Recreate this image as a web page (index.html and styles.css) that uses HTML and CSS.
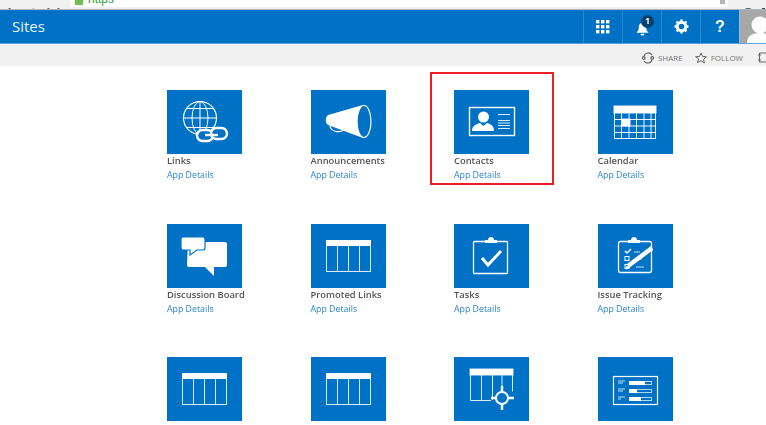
FILE: index.html
```html
<!DOCTYPE html>
<html lang="en">
<head>
    <meta charset="UTF-8">
    <title>Sites</title>
    <link rel="stylesheet" href="styles.css">
</head>
<body>
    <!-- Browser toolbar, cut off by the top of the picture -->
    <div class="browser">
        <div class="browser-nav">
            <svg width="60" height="9" viewBox="0 0 60 9" fill="none" stroke="#6d6d6d" stroke-width="1.6">
                <path d="M12 -2l-4 4h9" />
                <path d="M31 -2l4 4h-9" stroke="#c4c4c4" />
                <path d="M58 -1a5 5 0 1 1-9 0" stroke-width="2" />
            </svg>
        </div>
        <div class="url-bar">
            <span class="lock"></span>
            <span class="url">https</span>
            <span class="url-star"></span>
        </div>
        <div class="browser-tools">
            <svg width="38" height="9" viewBox="0 0 38 9">
                <path d="M14 6l4-6h5l-3 5-3 2z" fill="#6d6d6d" />
                <rect x="34" y="0" width="3" height="3" fill="#444" />
            </svg>
        </div>
    </div>

    <!-- Suite bar -->
    <header class="suite">
        <div class="suite-title">Sites</div>
        <div class="suite-btn">
            <svg width="14" height="14" viewBox="0 0 14 14" fill="#fff">
                <rect x="0" y="0" width="3.4" height="3.4" /><rect x="5" y="0" width="3.4" height="3.4" /><rect x="10" y="0" width="3.4" height="3.4" />
                <rect x="0" y="5" width="3.4" height="3.4" /><rect x="5" y="5" width="3.4" height="3.4" /><rect x="10" y="5" width="3.4" height="3.4" />
                <rect x="0" y="10" width="3.4" height="3.4" /><rect x="5" y="10" width="3.4" height="3.4" /><rect x="10" y="10" width="3.4" height="3.4" />
            </svg>
        </div>
        <div class="suite-btn">
            <svg class="bell" width="13" height="14" viewBox="0 0 14 15" fill="#fff">
                <path d="M7 1c3 0 4 2 4 5 0 3 1 4 2.500 5.500h-13C2 10 3 9 3 6c0-3 1-5 4-5z" />
                <path d="M5 12.500h4a2 2 0 0 1-4 0z" />
            </svg>
            <span class="badge">1</span>
        </div>
        <div class="suite-btn">
            <svg width="15" height="15" viewBox="0 0 15 15">
                <circle cx="7.500" cy="7.500" r="4.300" fill="none" stroke="#fff" stroke-width="3" />
                <path d="M7.500 0.500v14M0.500 7.500h14M2.500 2.500l10 10M12.500 2.500l-10 10" stroke="#fff" stroke-width="2.400" stroke-dasharray="2.600 8.800" />
            </svg>
        </div>
        <div class="suite-btn suite-help">?</div>
        <div class="avatar">
            <svg width="26" height="33" viewBox="0 0 26 33" fill="#fff">
                <circle cx="20" cy="15" r="8.500" />
                <path d="M7 33c0-7 5-10 13-10s13 3 13 10z" />
            </svg>
        </div>
    </header>

    <!-- Share / follow strip -->
    <div class="ribbon">
        <a class="ribbon-item">
            <svg width="12" height="12" viewBox="0 0 12 12" fill="none" stroke="#666" stroke-width="1.200">
                <path d="M2 4a4.500 4.500 0 0 1 8-1M10 8a4.500 4.500 0 0 1-8 1" />
                <circle cx="1.800" cy="6" r="1.300" /><circle cx="10.200" cy="6" r="1.300" />
            </svg>
            SHARE
        </a>
        <a class="ribbon-item">
            <svg width="12" height="12" viewBox="0 0 12 12" fill="none" stroke="#666" stroke-width="1">
                <path d="M6 1l1.500 3.400 3.900.4-2.900 2.500.9 3.700L6 8.700l-3.400 1.800.9-3.700L.6 4.800l3.900-.4z" />
            </svg>
            FOLLOW
        </a>
        <a class="ribbon-item ribbon-last">
            <svg width="8" height="11" viewBox="0 0 8 11" fill="none" stroke="#666" stroke-width="1">
                <path d="M8 1H1.500v9H8M0 3h3M0 8h3" />
            </svg>
        </a>
    </div>

    <!-- Table icon used by several apps -->
    <svg class="defs" width="0" height="0">
        <symbol id="table-icon" viewBox="0 0 75 64">
            <rect x="15.500" y="16.500" width="44" height="31" fill="none" stroke="#fff" stroke-opacity=".85" />
            <rect x="15" y="16" width="45" height="6" fill="#fff" />
            <path d="M26.500 22v25M37.500 22v25M48.500 22v25" stroke="#fff" stroke-opacity=".85" fill="none" />
        </symbol>
    </svg>

    <main class="apps">
        <div class="app">
            <div class="tile">
                <svg viewBox="0 0 75 64" fill="none" stroke="#fff">
                    <circle cx="33" cy="28" r="16.500" stroke-width="1.200" />
                    <ellipse cx="33" cy="28" rx="8" ry="16.500" />
                    <path d="M33 11.500v33M16.500 28h33M19 18.500h28M19 37.500h28" />
                    <rect x="30" y="40" width="16" height="11" rx="5.500" fill="#0072c6" stroke-width="2.400" />
                    <rect x="44" y="38" width="16" height="11" rx="5.500" fill="#0072c6" stroke-width="2.400" />
                    <path d="M38 45h13" stroke-width="2.400" />
                </svg>
            </div>
            <div class="app-name">Links</div>
            <a class="app-link">App Details</a>
        </div>

        <div class="app">
            <div class="tile">
                <svg viewBox="0 0 75 64" fill="none" stroke="#fff">
                    <path d="M19 36c1 6 9 7 14 4" stroke-width="1.300" />
                    <path d="M17 25L52 15C46 22 46 42 52 48L17 35c-3-2-3-8 0-10z" fill="#fff" stroke="none" />
                    <ellipse cx="53" cy="31.500" rx="7" ry="16" fill="#0072c6" stroke-width="1.200" />
                </svg>
            </div>
            <div class="app-name">Announcements</div>
            <a class="app-link">App Details</a>
        </div>

        <div class="app">
            <div class="tile">
                <svg viewBox="0 0 75 64" fill="none" stroke="#fff">
                    <rect x="15.500" y="17.500" width="45" height="28" stroke-width="1.400" />
                    <circle cx="29.500" cy="27" r="5.500" fill="#fff" stroke="none" />
                    <path d="M18 41c0-5 4-7 8-8l3.500 3 3.500-3c4 1 7 3 7 8z" fill="#fff" stroke="none" />
                    <path d="M44 24.500h12M44 30.500h12M44 33h12M44 35.500h12M44 38.500h12" stroke-opacity=".85" />
                </svg>
            </div>
            <div class="app-name">Contacts</div>
            <a class="app-link">App Details</a>
            <div class="highlight"></div>
        </div>

        <div class="app">
            <div class="tile">
                <svg viewBox="0 0 75 64" fill="none" stroke="#fff" stroke-opacity=".9">
                    <rect x="16.500" y="16.500" width="41" height="32" />
                    <rect x="16" y="16" width="42" height="7" fill="#fff" />
                    <path d="M16 29.500h42M16 36h42M16 42.500h42M23.500 23v25M31 23v25M38.500 23v25M46 23v25M53 23v25" />
                    <rect x="24" y="29" width="8" height="7" fill="#fff" />
                </svg>
            </div>
            <div class="app-name">Calendar</div>
            <a class="app-link">App Details</a>
        </div>

        <div class="app">
            <div class="tile">
                <svg viewBox="0 0 75 64">
                    <path d="M21 18h37a2 2 0 0 1 2 2v21a2 2 0 0 1-2 2H47v9l-9-9H22a2 2 0 0 1-2-2z" fill="#fff" />
                    <path d="M16 13h20a2 2 0 0 1 2 2v9a2 2 0 0 1-2 2H30l-7 5v-5h-7a2 2 0 0 1-2-2v-9a2 2 0 0 1 2-2z" fill="#fff" stroke="#0072c6" stroke-width="1.200" />
                </svg>
            </div>
            <div class="app-name">Discussion Board</div>
            <a class="app-link">App Details</a>
        </div>

        <div class="app">
            <div class="tile"><svg viewBox="0 0 75 64"><use href="#table-icon" /></svg></div>
            <div class="app-name">Promoted Links</div>
            <a class="app-link">App Details</a>
        </div>

        <div class="app">
            <div class="tile">
                <svg viewBox="0 0 75 64" fill="none" stroke="#fff">
                    <rect x="19.500" y="17.500" width="34" height="32" rx="1" stroke-width="1.300" />
                    <path d="M31 19v-3h3c0-4 6-4 6 0h3v3z" fill="#fff" stroke="none" />
                    <path d="M28 34l6 7 13-14" stroke-width="3" />
                </svg>
            </div>
            <div class="app-name">Tasks</div>
            <a class="app-link">App Details</a>
        </div>

        <div class="app">
            <div class="tile">
                <svg viewBox="0 0 75 64" fill="none" stroke="#fff">
                    <rect x="20.500" y="17.500" width="33" height="31" rx="2" stroke-width="1.300" />
                    <path d="M30 19v-3h3c0-4 6-4 6 0h3v3z" fill="#fff" stroke="none" />
                    <path d="M27 27l2 2 4-4" stroke-width="1.500" />
                    <rect x="27" y="32.500" width="4" height="4" />
                    <rect x="27" y="40.500" width="4" height="4" />
                    <path d="M36 28h6M40 35h4M38 43h8" stroke-opacity=".8" />
                    <path d="M30 42L54 24" stroke-width="4.500" />
                    <path d="M28 45l1-3 2 2z" fill="#fff" />
                </svg>
            </div>
            <div class="app-name">Issue Tracking</div>
            <a class="app-link">App Details</a>
        </div>

        <div class="app">
            <div class="tile"><svg viewBox="0 0 75 64"><use href="#table-icon" /></svg></div>
        </div>

        <div class="app">
            <div class="tile"><svg viewBox="0 0 75 64"><use href="#table-icon" /></svg></div>
        </div>

        <div class="app">
            <div class="tile">
                <svg viewBox="0 0 75 64" fill="none" stroke="#fff" stroke-opacity=".85">
                    <path d="M37 43.500H16.500v-31h42v22" />
                    <rect x="16" y="12" width="43" height="6" fill="#fff" />
                    <path d="M27.500 18v25M38.500 18v25M48 18v15" />
                    <circle cx="48" cy="41" r="6" stroke-width="2" stroke-opacity="1" />
                    <path d="M37 41h5M54 41h6M48 47v6M48 29v6" stroke-width="2.500" stroke-opacity="1" />
                </svg>
            </div>
        </div>

        <div class="app">
            <div class="tile">
                <svg viewBox="0 0 75 64" fill="none" stroke="#fff">
                    <rect x="15.500" y="19.500" width="44" height="28" stroke-width="1.200" />
                    <path d="M20 24h7M20 26h5M20 32h7M20 34h5M20 40h7M20 42h3" stroke-opacity=".75" />
                    <rect x="31.500" y="24.500" width="22" height="3" stroke-opacity=".7" />
                    <rect x="31.500" y="32.500" width="22" height="3" stroke-opacity=".7" />
                    <rect x="31.500" y="40.500" width="22" height="3" stroke-opacity=".7" />
                    <rect x="31" y="24" width="16" height="4" fill="#fff" stroke="none" />
                    <rect x="31" y="32" width="8" height="4" fill="#fff" stroke="none" />
                    <rect x="31" y="40" width="12" height="4" fill="#fff" stroke="none" />
                </svg>
            </div>
        </div>
    </main>
</body>
</html>
```

FILE: styles.css
```css
/* General Styles */
html, body {
    height: 100%;
    overflow: hidden;
}

body {
    margin: 0;
    background: #fff;
    font-family: 'Open Sans', sans-serif;
    color: #444;
    filter: blur(0.35px);
}

/* Browser toolbar */
.browser {
    display: flex;
    height: 9px;
    background: #f1f1f1;
    border-bottom: 1px solid #a9b4bd;
    overflow: hidden;
}

.browser-nav {
    width: 70px;
    flex: none;
}

.url-bar {
    display: flex;
    flex: 1;
    height: 7px;
    gap: 5px;
    padding-left: 5px;
    background: #fff;
    overflow: hidden;
}

.lock {
    width: 8px;
    height: 5px;
    background: #6cbf4b;
}

.url {
    margin-top: -8px;
    font-family: 'Liberation Sans', sans-serif;
    font-size: 12px;
    line-height: 14px;
    color: #2e9e3a;
}

.url-star {
    width: 5px;
    height: 4px;
    margin: 0 3px 0 auto;
    background: #b5b5b5;
}

.browser-tools {
    width: 38px;
    flex: none;
}

/* Suite bar */
.suite {
    display: flex;
    height: 33px;
    background: #0072c6;
    border-bottom: 1px solid #5aa5dc;
}

.suite-title {
    flex: 1;
    padding-left: 12px;
    font-size: 15px;
    line-height: 33px;
    color: #eaf3fa;
}

.suite-btn {
    position: relative;
    display: flex;
    align-items: center;
    justify-content: center;
    width: 39px;
    border-left: 1px solid #2a88cf;
    box-sizing: border-box;
}

.suite-help {
    font-family: 'Liberation Sans', sans-serif;
    font-size: 16px;
    font-weight: bold;
    color: #fff;
}

.bell {
    margin-top: 4px;
}

.badge {
    position: absolute;
    top: 5px;
    left: 18px;
    width: 13px;
    height: 13px;
    border-radius: 50%;
    background: #04406e;
    color: #fff;
    font-size: 8px;
    font-weight: bold;
    line-height: 12px;
    text-align: center;
}

.avatar {
    width: 26px;
    margin-left: 1px;
    background: #a8a8a8;
    overflow: hidden;
    box-shadow: -1px 0 0 #8fbfe0;
}

.avatar svg {
    display: block;
}

/* Share / follow strip */
.ribbon {
    display: flex;
    align-items: center;
    justify-content: flex-end;
    height: 22px;
    padding-top: 5px;
    box-sizing: border-box;
    background: #f1f1f1;
}

.ribbon-item {
    display: flex;
    align-items: center;
    gap: 4px;
    margin-left: 12px;
    font-size: 8px;
    color: #777;
}

.ribbon-last {
    margin-left: 15px;
}

.defs {
    position: absolute;
}

/* App tiles */
.apps {
    display: grid;
    grid-template-columns: repeat(4, 75px);
    grid-auto-rows: 133.500px;
    column-gap: 68.500px;
    padding: 24px 0 0 167px;
}

.app {
    position: relative;
}

.tile {
    width: 75px;
    height: 64px;
    background: #0072c6;
}

.tile svg {
    display: block;
    width: 75px;
    height: 64px;
}

.app-name {
    font-size: 9.400px;
    font-weight: 600;
    line-height: 14px;
    white-space: nowrap;
    color: #555;
}

.app-link {
    display: block;
    font-size: 8.800px;
    line-height: 14px;
    color: #2b85cc;
}

.highlight {
    position: absolute;
    top: -18px;
    left: -24px;
    width: 124px;
    height: 113px;
    box-sizing: border-box;
    border: 2px solid #ee1c25;
}
```
